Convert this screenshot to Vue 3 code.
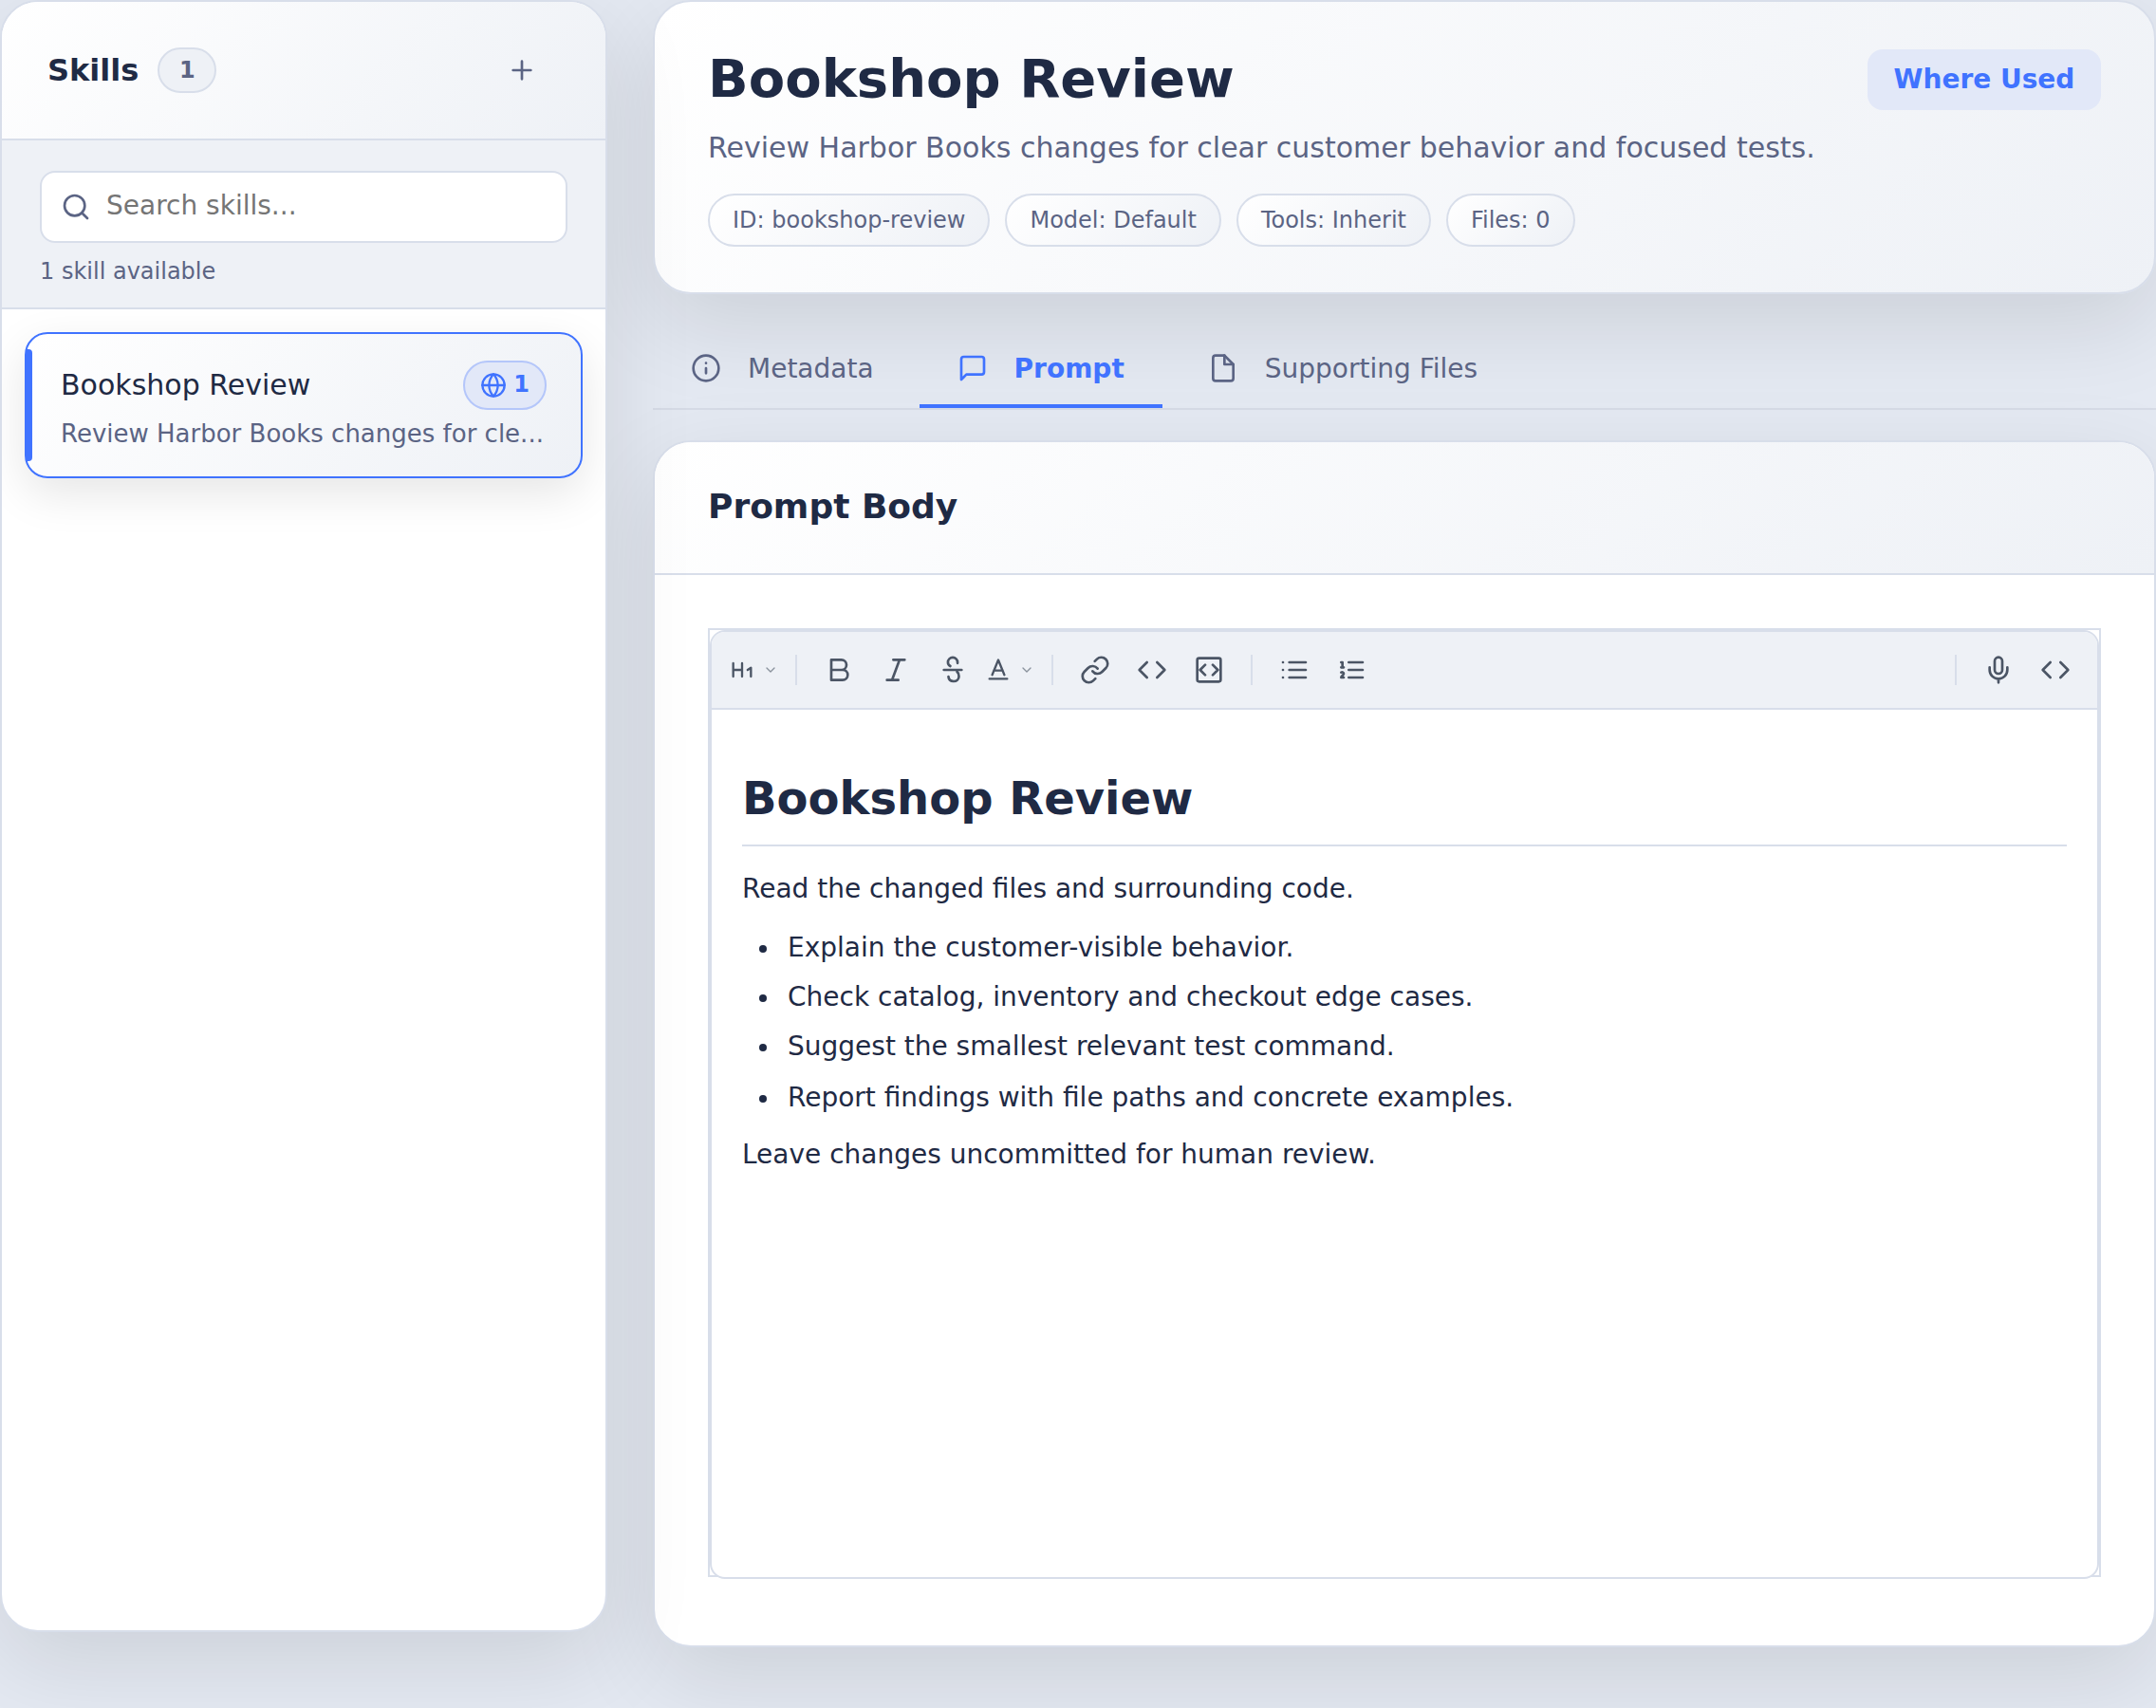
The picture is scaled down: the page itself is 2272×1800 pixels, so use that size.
<script setup>
const meta = ['ID: bookshop-review', 'Model: Default', 'Tools: Inherit', 'Files: 0']
const steps = [
  'Explain the customer-visible behavior.',
  'Check catalog, inventory and checkout edge cases.',
  'Suggest the smallest relevant test command.',
  'Report findings with file paths and concrete examples.'
]
</script>

<template>
  <div class="page">
    <aside class="sidebar">
      <header class="side-head">
        <h2>Skills</h2>
        <span class="count">1</span>
        <button class="add" aria-label="Add skill">
          <svg class="icon" viewBox="0 0 24 24"><path d="M5 12h14M12 5v14" /></svg>
        </button>
      </header>
      <section class="search">
        <div class="search-box">
          <svg class="icon" viewBox="0 0 24 24"><circle cx="11" cy="11" r="8" /><path d="m21 21-4.35-4.35" /></svg>
          <span>Search skills...</span>
        </div>
        <p>1 skill available</p>
      </section>
      <div class="skill-list">
        <article class="skill">
          <div class="skill-top">
            <span class="skill-name">Bookshop Review</span>
            <span class="scope">
              <svg class="icon globe" viewBox="0 0 24 24"><circle cx="12" cy="12" r="10" /><path d="M2 12h20M12 2a15.3 15.3 0 0 1 4 10 15.3 15.3 0 0 1-4 10 15.3 15.3 0 0 1-4-10 15.3 15.3 0 0 1 4-10z" /></svg>
              <b>1</b>
            </span>
          </div>
          <p class="skill-desc">Review Harbor Books changes for cle...</p>
        </article>
      </div>
    </aside>

    <main class="main">
      <header class="hero">
        <div class="hero-text">
          <h1>Bookshop Review</h1>
          <p>Review Harbor Books changes for clear customer behavior and focused tests.</p>
          <div class="chips"><span v-for="m in meta" :key="m" class="chip">{{ m }}</span></div>
        </div>
        <button class="used">Where Used</button>
      </header>

      <nav class="tabs">
        <a class="tab">
          <svg class="icon" viewBox="0 0 24 24"><circle cx="12" cy="12" r="10" /><path d="M12 16v-4M12 8h.01" /></svg>
          <span>Metadata</span>
        </a>
        <a class="tab active">
          <svg class="icon" viewBox="0 0 24 24"><path d="M21 15a2 2 0 0 1-2 2H7l-4 4V5a2 2 0 0 1 2-2h14a2 2 0 0 1 2 2z" /></svg>
          <span>Prompt</span>
        </a>
        <a class="tab">
          <svg class="icon" viewBox="0 0 24 24"><path d="M13 2H6a2 2 0 0 0-2 2v16a2 2 0 0 0 2 2h12a2 2 0 0 0 2-2V9z" /><path d="M13 2v7h7" /></svg>
          <span>Supporting Files</span>
        </a>
      </nav>

      <section class="panel">
        <header class="panel-head"><h3>Prompt Body</h3></header>
        <div class="panel-body">
          <div class="frame">
            <div class="editor">
              <div class="toolbar">
                <span class="tool drop">
                  <svg class="icon md" viewBox="0 0 24 24"><path d="M4 12h8M4 18V6M12 18V6M17 12l3-2v8" /></svg>
                  <svg class="icon caret" viewBox="0 0 24 24"><path d="m6 9 6 6 6-6" /></svg>
                </span>
                <i class="sep"></i>
                <span class="tool"><svg class="icon" viewBox="0 0 24 24"><path d="M6 12h9a4 4 0 0 1 0 8H6V4h8a4 4 0 0 1 0 8" /></svg></span>
                <span class="tool"><svg class="icon" viewBox="0 0 24 24"><path d="M19 4h-9M14 20H5M15 4 9 20" /></svg></span>
                <span class="tool"><svg class="icon" viewBox="0 0 24 24"><path d="M5 12h14M15.8 6.6V6a3.8 3.8 0 0 0-7.6 0c0 1.3.7 2.4 1.900 3M8.600 17.400c.2 2.200 1.900 3.600 4.100 3.600 2.400 0 4.200-1.700 4.200-4 0-1.500-.5-2.800-1.500-3.600" /></svg></span>
                <span class="tool drop">
                  <svg class="icon md" viewBox="0 0 24 24"><path d="m6.500 16.500 5.500-13.500 5.500 13.500M8 12.500h8M4 20h16" /></svg>
                  <svg class="icon caret" viewBox="0 0 24 24"><path d="m6 9 6 6 6-6" /></svg>
                </span>
                <i class="sep"></i>
                <span class="tool"><svg class="icon" viewBox="0 0 24 24"><path d="M10 13a5 5 0 0 0 7.540.540l3-3a5 5 0 0 0-7.070-7.070l-1.720 1.710" /><path d="M14 11a5 5 0 0 0-7.540-.54l-3 3a5 5 0 0 0 7.070 7.070l1.710-1.710" /></svg></span>
                <span class="tool"><svg class="icon" viewBox="0 0 24 24"><path d="m16 18 6-6-6-6M8 6l-6 6 6 6" /></svg></span>
                <span class="tool"><svg class="icon" viewBox="0 0 24 24"><rect x="2.750" y="2.750" width="18.500" height="18.500" rx="1.500" /><path d="m9 8-4 4 4 4M15 8l4 4-4 4" /></svg></span>
                <i class="sep"></i>
                <span class="tool"><svg class="icon" viewBox="0 0 24 24"><path d="M8 6h13M8 12h13M8 18h13M3 6h.01M3 12h.01M3 18h.01" /></svg></span>
                <span class="tool"><svg class="icon" viewBox="0 0 24 24"><path d="M10 6h11M10 12h11M10 18h11M4 6h1v4M4 10h2M6 18H4c0-1 2-2 2-3s-1-1.500-2-1" /></svg></span>
                <i class="sep push"></i>
                <span class="tool"><svg class="icon" viewBox="0 0 24 24"><path d="M12 2a3 3 0 0 0-3 3v7a3 3 0 0 0 6 0V5a3 3 0 0 0-3-3Z" /><path d="M19 10v2a7 7 0 0 1-14 0v-2M12 19v3" /></svg></span>
                <span class="tool"><svg class="icon" viewBox="0 0 24 24"><path d="m16 18 6-6-6-6M8 6l-6 6 6 6" /></svg></span>
              </div>
              <div class="doc">
                <h1>Bookshop Review</h1>
                <p>Read the changed files and surrounding code.</p>
                <ul><li v-for="s in steps" :key="s">{{ s }}</li></ul>
                <p>Leave changes uncommitted for human review.</p>
              </div>
            </div>
          </div>
        </div>
      </section>
    </main>
  </div>
</template>

<style>
body { margin: 0; background: #e4e9f2; }
</style>

<style scoped>
.page, .page * { box-sizing: border-box; }
.page {
  --line: #d8deea;
  --ink: #1f2a44;
  --muted: #5b6484;
  --soft: #eef1f6;
  --blue: #4073ff;
  --shade: 0 32px 96px rgba(0, 0, 0, 0.105);
  --sheen: linear-gradient(135deg, #fff 0%, #eef1f6 100%);
  display: flex;
  align-items: flex-start;
  gap: 48px;
  width: 2272px;
  height: 1800px;
  overflow: hidden;
  background: #e4e9f2;
  color: var(--ink);
  font-family: "DejaVu Sans", sans-serif;
  font-size: 28px;
}
h1, h2, h3, p, ul { margin: 0; }
button { font: inherit; border: 0; background: none; padding: 0; }
.icon {
  display: block;
  flex: none;
  width: 32px;
  height: 32px;
  fill: none;
  stroke: currentColor;
  stroke-width: 2;
  stroke-linecap: round;
  stroke-linejoin: round;
}

.sidebar {
  position: relative;
  z-index: 1;
  flex: none;
  width: 640px;
  height: 1720px;
  border: 2px solid var(--line);
  border-radius: 40px;
  background: #fff;
  box-shadow: var(--shade);
  overflow: hidden;
}
.side-head {
  display: flex;
  align-items: center;
  height: 146px;
  padding: 0 48px;
  background: var(--sheen);
  border-bottom: 2px solid var(--line);
}
.side-head h2 { font-size: 32px; line-height: 40px; }
.count {
  margin-left: 20px;
  width: 62px;
  height: 48px;
  border: 2px solid var(--line);
  border-radius: 24px;
  background: var(--soft);
  color: var(--muted);
  font-size: 24px;
  font-weight: 700;
  line-height: 44px;
  text-align: center;
}
.add { margin-left: auto; margin-right: 24px; color: var(--muted); }
.search {
  height: 178px;
  padding: 32px 40px 0;
  background: var(--soft);
  border-bottom: 2px solid var(--line);
}
.search-box {
  display: flex;
  align-items: center;
  gap: 16px;
  height: 76px;
  padding: 0 20px;
  border: 2px solid var(--line);
  border-radius: 16px;
  background: #fff;
  color: var(--muted);
}
.search-box span { color: #757575; padding-bottom: 3px; }
.search p { margin-top: 14px; font-size: 24px; line-height: 32px; color: var(--muted); }
.skill-list { padding: 24px; }
.skill {
  position: relative;
  height: 154px;
  padding: 28px 34px 0 36px;
  border: 2px solid var(--blue);
  border-radius: 24px;
  background: var(--sheen);
  box-shadow: 0 16px 48px rgba(0, 0, 0, 0.1);
}
.skill::before {
  content: "";
  position: absolute;
  left: 0;
  top: 16px;
  bottom: 16px;
  width: 6px;
  border-radius: 0 4px 4px 0;
  background: var(--blue);
}
.skill-top { display: flex; align-items: center; justify-content: space-between; height: 52px; padding-right: 2px; }
.skill-name { font-size: 30px; padding-bottom: 2px; }
.scope {
  display: flex;
  align-items: center;
  justify-content: center;
  gap: 7px;
  width: 88px;
  height: 52px;
  border: 2px solid #b4c6fa;
  border-radius: 26px;
  background: #e2e8f8;
  color: var(--blue);
  font-size: 24px;
}
.scope b { padding-bottom: 2px; }
.globe { width: 28px; height: 28px; }
.skill-desc {
  font-size: 26px;
  line-height: 36px;
  margin-top: 7px;
  color: var(--muted);
  white-space: nowrap;
}

.main { flex: 1; min-width: 0; }
.hero {
  display: flex;
  justify-content: space-between;
  align-items: flex-start;
  height: 310px;
  padding: 50px 56px 0;
  border: 2px solid var(--line);
  border-radius: 40px;
  background: var(--sheen);
  box-shadow: var(--shade);
}
.hero h1 { font-size: 56px; line-height: 62px; }
.hero p { margin-top: 21px; font-size: 30px; line-height: 42px; color: var(--muted); }
.chips { display: flex; gap: 16px; margin-top: 27px; }
.chip {
  height: 56px;
  padding: 0 24px;
  border: 2px solid var(--line);
  border-radius: 28px;
  background: var(--sheen);
  color: var(--muted);
  font-size: 24px;
  line-height: 52px;
}
.used {
  width: 246px;
  height: 64px;
  padding-bottom: 2px;
  border-radius: 16px;
  background: #e2e8f8;
  color: var(--blue);
  font-weight: 700;
}
.tabs {
  display: flex;
  gap: 8px;
  height: 82px;
  margin-top: 40px;
  border-bottom: 2px solid #d6dbe6;
}
.tab {
  display: flex;
  align-items: center;
  gap: 28px;
  padding: 0 40px;
  border-bottom: 4px solid transparent;
  color: var(--muted);
}
.tab.active { color: var(--blue); border-color: var(--blue); font-weight: 700; }
.panel {
  height: 1272px;
  margin-top: 32px;
  border: 2px solid var(--line);
  border-radius: 40px;
  background: #fff;
  box-shadow: var(--shade);
  overflow: hidden;
}
.panel-head {
  display: flex;
  align-items: center;
  height: 140px;
  padding: 0 56px 3px;
  background: var(--sheen);
  border-bottom: 2px solid var(--line);
}
.panel-head h3 { font-size: 36px; }
.panel-body { padding: 56px; }
.frame { height: 1000px; border: 2px solid var(--line); }
.editor {
  height: 1000px;
  border: 2px solid var(--line);
  border-radius: 16px;
  background: #fff;
  overflow: hidden;
}
.toolbar {
  display: flex;
  align-items: center;
  gap: 4px;
  height: 82px;
  padding: 0 16px;
  background: var(--soft);
  border-bottom: 2px solid var(--line);
  color: #4b5565;
}
.tool { display: flex; align-items: center; justify-content: center; width: 56px; height: 56px; }
.drop { gap: 8px; }
.md { width: 28px; height: 28px; }
.caret { width: 16px; height: 16px; opacity: 0.6; }
.sep { width: 2px; height: 32px; margin: 0 12px; background: var(--line); }
.push { margin-left: auto; }
.doc { padding: 64px 32px 0; line-height: 45px; }
.doc h1 {
  height: 80px;
  border-bottom: 2px solid var(--line);
  font-size: 48px;
  line-height: 58px;
}
.doc p { margin-top: 22px; }
.doc ul { margin-top: 17px; padding-left: 48px; list-style: none; }
.doc li + li { margin-top: 7px; }
.doc li:last-child { margin-top: 9px; }
.doc li::before {
  content: "";
  display: inline-block;
  width: 8px;
  height: 8px;
  margin: 0 22px 0 -30px;
  border-radius: 50%;
  background: currentColor;
  vertical-align: 4px;
}
.doc ul + p { margin-top: 15px; }
</style>
